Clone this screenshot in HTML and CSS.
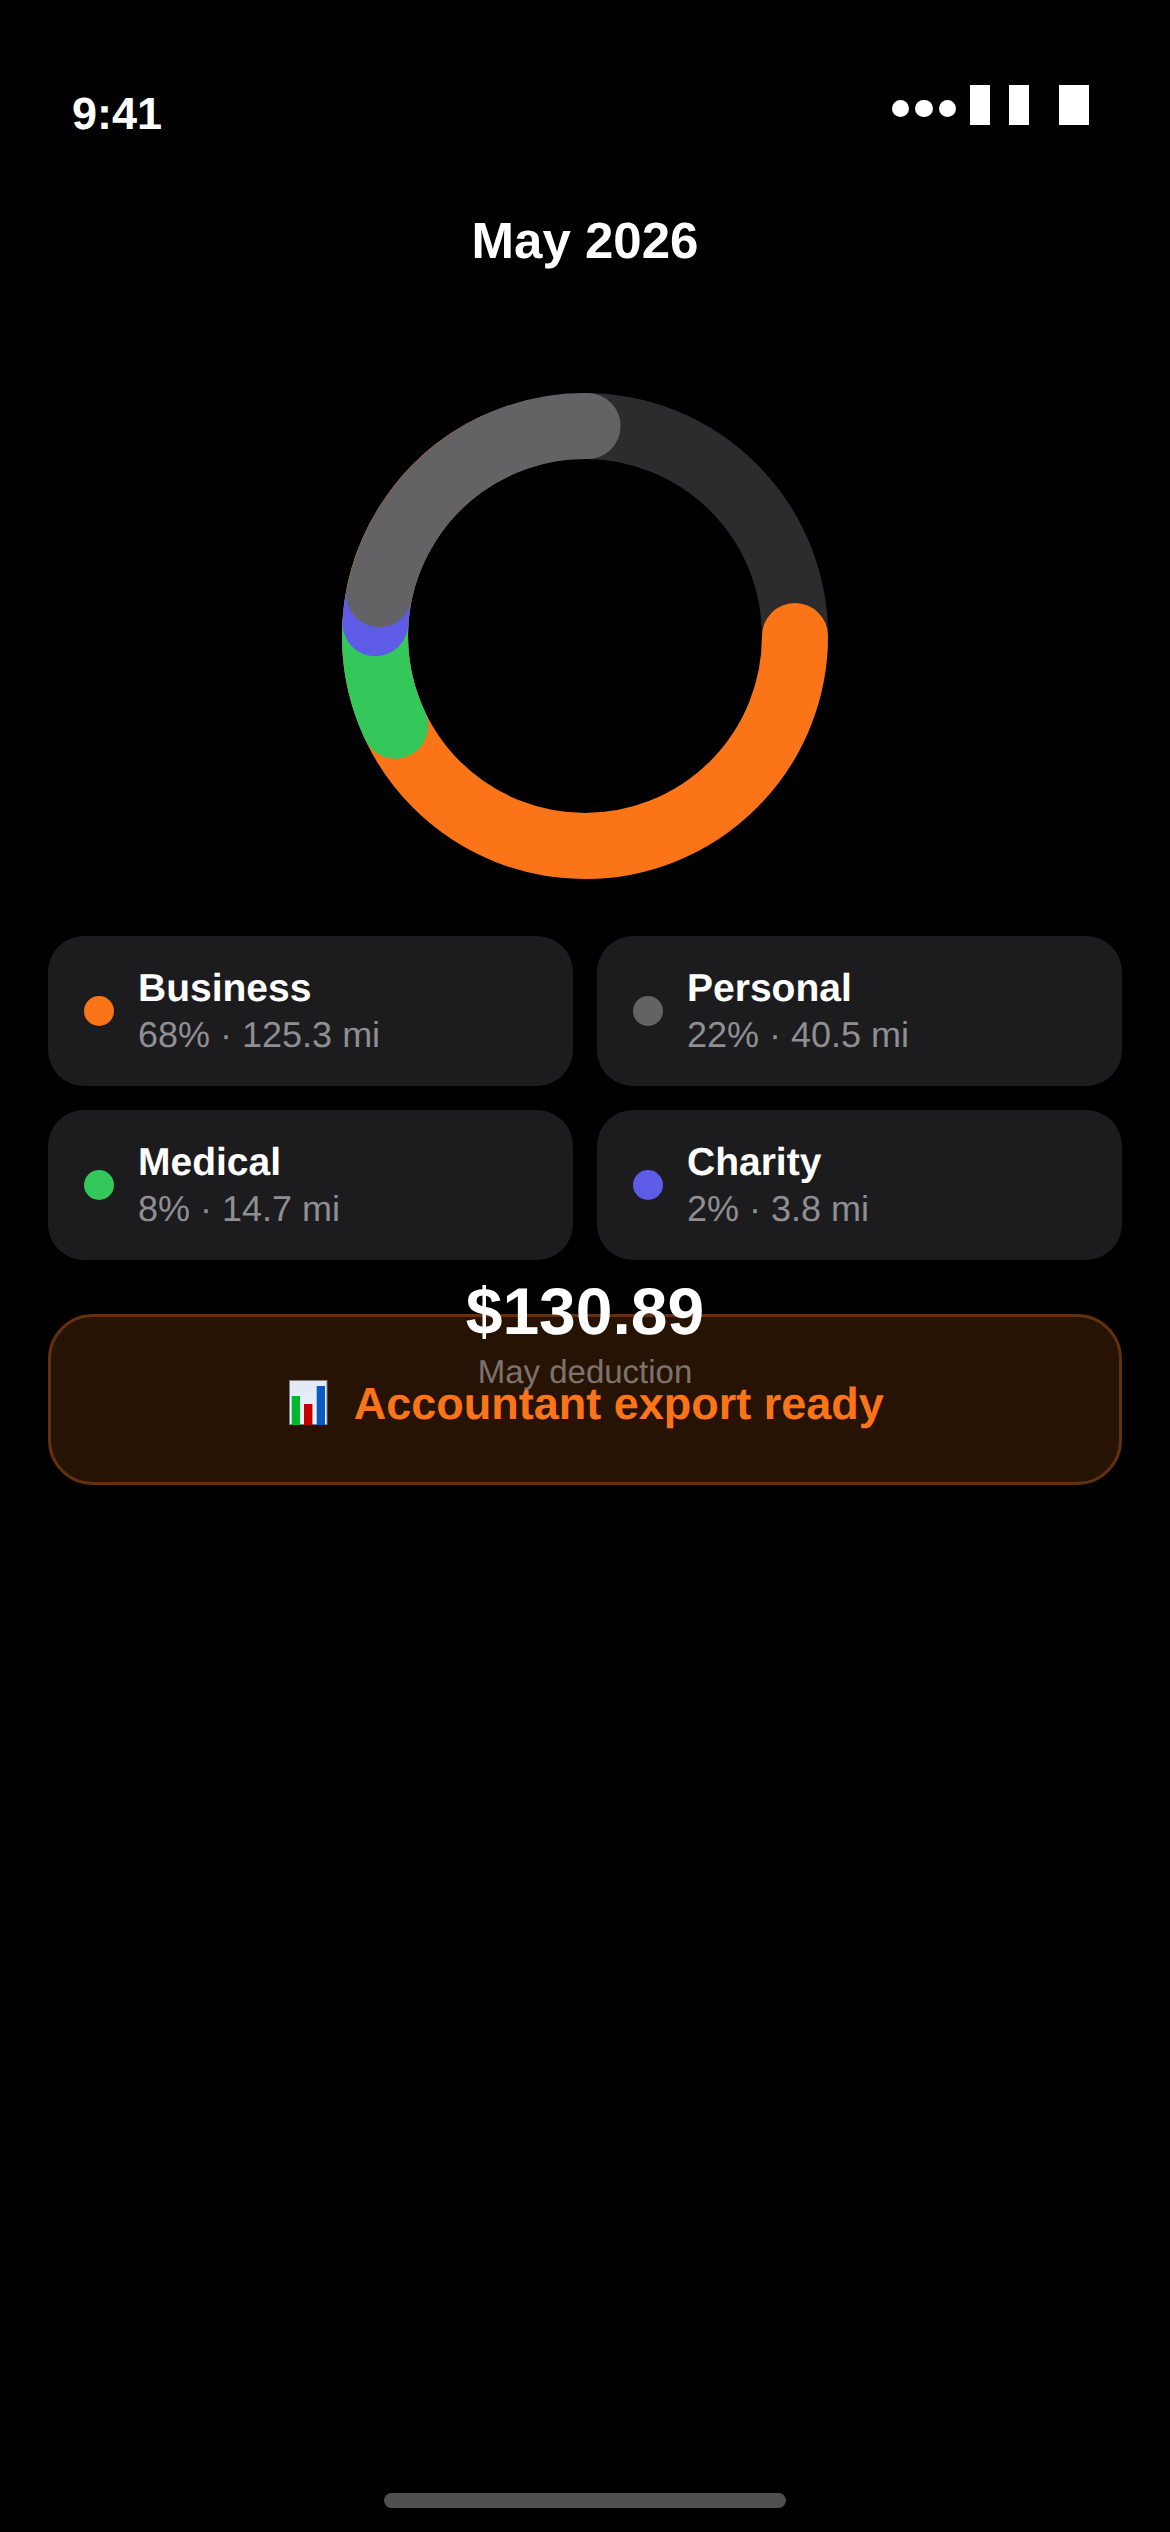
FILE: index.html
```html
<!DOCTYPE html>
<html lang="en">
<head>
<meta charset="utf-8">
<title>May 2026</title>
<link rel="stylesheet" href="styles.css">
</head>
<body>
<main class="phone">
  <header class="status">
    <span class="time">9:41</span>
    <div class="status-icons">
      <span class="dots"><i class="dot"></i><i class="dot"></i><i class="dot"></i></span>
      <i class="bar"></i>
      <i class="bar bar-second"></i>
      <i class="bar bar-wide"></i>
    </div>
  </header>

  <h1 class="title">May 2026</h1>

  <svg class="ring" viewBox="-243 -243 486 486" width="486" height="486" aria-hidden="true">
    <circle class="track" r="210"></circle>
    <circle class="seg seg-business" r="210" pathLength="100" stroke-dasharray="68 32"></circle>
    <circle class="seg seg-medical" r="210" pathLength="100" stroke-dasharray="8 92" transform="rotate(154.7)"></circle>
    <circle class="seg seg-charity" r="210" pathLength="100" stroke-dasharray="2 98" transform="rotate(183.5)"></circle>
    <circle class="seg seg-personal" r="210" pathLength="100" stroke-dasharray="22 78" transform="rotate(191.5)"></circle>
  </svg>

  <section class="legend">
    <article class="card">
      <i class="swatch swatch-business"></i>
      <div><div class="name">Business</div><div class="sub">68% · 125.3 mi</div></div>
    </article>
    <article class="card">
      <i class="swatch swatch-personal"></i>
      <div><div class="name">Personal</div><div class="sub">22% · 40.5 mi</div></div>
    </article>
    <article class="card">
      <i class="swatch swatch-medical"></i>
      <div><div class="name">Medical</div><div class="sub">8% · 14.7 mi</div></div>
    </article>
    <article class="card">
      <i class="swatch swatch-charity"></i>
      <div><div class="name">Charity</div><div class="sub">2% · 3.8 mi</div></div>
    </article>
  </section>

  <section class="deduction">
    <div class="amount">$130.89</div>
    <div class="amount-label">May deduction</div>
  </section>

  <div class="banner">
    <svg class="chart-emoji" viewBox="0 0 38.5 45" width="38.5" height="45" aria-hidden="true">
      <defs>
        <linearGradient id="paper" x1="0" y1="0" x2="0" y2="1">
          <stop offset="0" stop-color="#dfe9f3"></stop>
          <stop offset="1" stop-color="#eef3f8"></stop>
        </linearGradient>
      </defs>
      <rect x="0.5" y="0.5" width="37.5" height="44" fill="url(#paper)" stroke="#7c7f84"></rect>
      <rect x="2.7" y="16" width="8.3" height="29" fill="#00b82e"></rect>
      <rect x="15" y="24" width="8.4" height="21" fill="#c20000"></rect>
      <rect x="27.7" y="6" width="8.3" height="39" fill="#0a5ac4"></rect>
    </svg>
    <span class="banner-text">Accountant export ready</span>
  </div>

  <div class="home"></div>
</main>
</body>
</html>
```

FILE: styles.css
```css
* { box-sizing: border-box; }

html, body {
  margin: 0;
  background: #000;
}

.phone {
  display: flex;
  flex-direction: column;
  width: 1170px;
  min-height: 2532px;
  background: #000;
  color: #fff;
  font-family: "Liberation Sans", Arial, sans-serif;
  text-rendering: geometricPrecision;
}

.status {
  display: flex;
  justify-content: space-between;
  align-items: flex-start;
  padding: 85px 81px 0 72px;
}

.time {
  margin-top: 2px;
  font-size: 45px;
  line-height: 54px;
  font-weight: 700;
}

.status-icons {
  display: flex;
  align-items: flex-end;
}

.dots {
  display: flex;
  gap: 6px;
  margin: 0 14px 8px 0;
}

.dot {
  display: block;
  width: 17.3px;
  height: 17.3px;
  border-radius: 50%;
  background: #fff;
}

.bar {
  display: block;
  width: 20px;
  height: 40px;
  background: #fff;
}

.bar-second { margin-left: 19px; }

.bar-wide {
  width: 30px;
  margin-left: 30px;
}

.title {
  margin: 70px 0 0;
  text-align: center;
  font-size: 51px;
  line-height: 60px;
  font-weight: 700;
}

.ring {
  display: block;
  align-self: center;
  margin-top: 122px;
}

.track,
.seg {
  fill: none;
  stroke-width: 66;
}

.track { stroke: #2c2c2e; }
.seg { stroke-linecap: round; }
.seg-business { stroke: #fb7417; }
.seg-medical { stroke: #34c759; }
.seg-charity { stroke: #5e5ce6; }
.seg-personal { stroke: #636366; }

.legend {
  display: grid;
  grid-template-columns: 1fr 1fr;
  gap: 24px;
  margin-top: 57px;
  padding: 0 48px;
}

.card {
  display: flex;
  align-items: center;
  gap: 24px;
  padding: 30px 36px;
  border-radius: 36px;
  background: #1c1c1e;
}

.swatch {
  flex: none;
  width: 30px;
  height: 30px;
  border-radius: 50%;
}

.swatch-business { background: #fb7417; }
.swatch-personal { background: #636366; }
.swatch-medical { background: #34c759; }
.swatch-charity { background: #5e5ce6; }

.name {
  font-size: 39px;
  line-height: 45px;
  font-weight: 700;
}

.sub {
  margin-top: 3px;
  font-size: 36px;
  line-height: 42px;
  color: #8e8e93;
}

.deduction {
  position: relative;
  z-index: 1;
  margin: 13px 0 -78px;
  text-align: center;
}

.amount {
  font-size: 66px;
  line-height: 76px;
  font-weight: 700;
}

.amount-label {
  margin-top: 3px;
  font-size: 33px;
  line-height: 40px;
  color: rgba(235, 235, 245, 0.45);
}

.banner {
  display: flex;
  justify-content: center;
  align-items: flex-start;
  gap: 26px;
  margin: 0 48px;
  padding: 61px 0 52px 3px;
  border: 3px solid #642f0c;
  border-radius: 45px;
  background: #271304;
}

.chart-emoji {
  flex: none;
  margin-top: 2px;
}

.banner-text {
  font-size: 45px;
  line-height: 52px;
  font-weight: 700;
  color: #fb7417;
}

.home {
  align-self: center;
  width: 402px;
  height: 15px;
  margin-top: auto;
  margin-bottom: 24px;
  border-radius: 9px;
  background: #505050;
}
```
